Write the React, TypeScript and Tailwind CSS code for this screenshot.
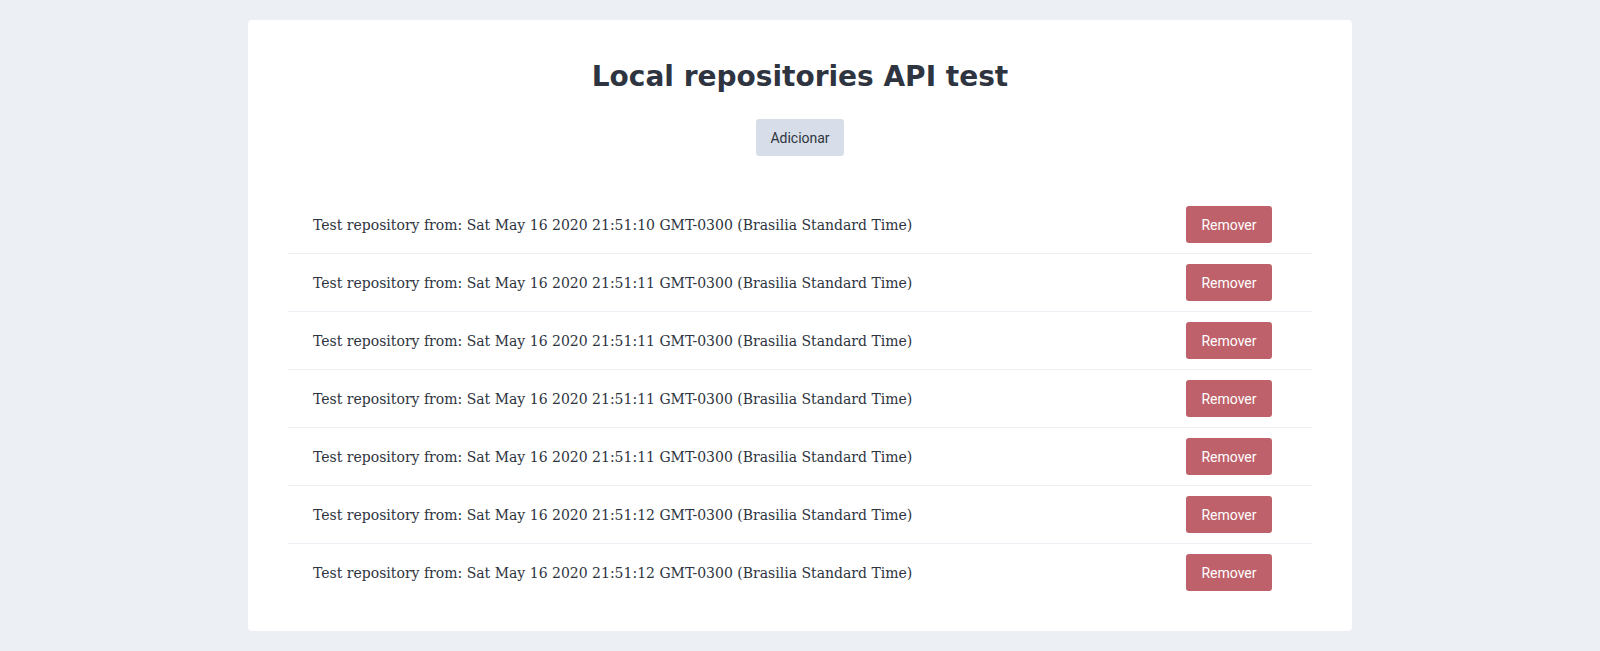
import React, { useState } from 'react';

const initialRepos = [
    'Test repository from: Sat May 16 2020 21:51:10 GMT-0300 (Brasilia Standard Time)',
    'Test repository from: Sat May 16 2020 21:51:11 GMT-0300 (Brasilia Standard Time)',
    'Test repository from: Sat May 16 2020 21:51:11 GMT-0300 (Brasilia Standard Time)',
    'Test repository from: Sat May 16 2020 21:51:11 GMT-0300 (Brasilia Standard Time)',
    'Test repository from: Sat May 16 2020 21:51:11 GMT-0300 (Brasilia Standard Time)',
    'Test repository from: Sat May 16 2020 21:51:12 GMT-0300 (Brasilia Standard Time)',
    'Test repository from: Sat May 16 2020 21:51:12 GMT-0300 (Brasilia Standard Time)',
];

const App: React.FC = () => {
    const [repositories, setRepositories] = useState(
        initialRepos.map((title, i) => ({ id: i, title }))
    );

    const handleAdd = () => {
        setRepositories([
            ...repositories,
            { id: Date.now(), title: `Test repository from: ${new Date().toString()}` },
        ]);
    };

    const handleRemove = (id: number) => {
        setRepositories(repositories.filter(repo => repo.id !== id));
    };

    return (
        <div className="min-h-screen bg-[#eceff4] pt-5 pb-5">
            <div className="mx-auto w-[1104px] rounded bg-white px-10 pt-[39px] pb-[30px] text-[#2e3440]">
                <h1 className="text-center font-['DejaVu_Sans',sans-serif] text-[28px] leading-9 font-bold">
                    Local repositories API test
                </h1>

                <div className="mt-6 flex justify-center">
                    <button
                        onClick={handleAdd}
                        className="h-[37px] w-[88px] rounded-[3px] bg-[#d8dee9] font-['Roboto',sans-serif] text-sm text-[#2e3440]"
                    >
                        Adicionar
                    </button>
                </div>

                {/* Repository list */}
                <ul className="mt-10">
                    {repositories.map(repo => (
                        <li
                            key={repo.id}
                            className="flex items-center justify-between border-b border-[#eceff4] py-2.5 pr-10 pl-[25px] last:border-b-0"
                        >
                            <span className="font-['DejaVu_Serif',serif] text-sm">{repo.title}</span>
                            <button
                                onClick={() => handleRemove(repo.id)}
                                className="h-[37px] w-[86px] rounded-[3px] bg-[#bf616a] font-['Roboto',sans-serif] text-sm text-white"
                            >
                                Remover
                            </button>
                        </li>
                    ))}
                </ul>
            </div>
        </div>
    );
};

export default App;
